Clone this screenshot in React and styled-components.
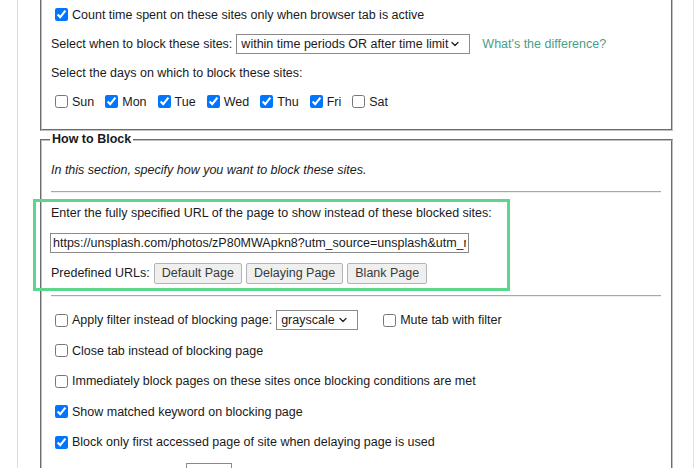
import { ChevronDown } from "lucide-react"
import styled, { createGlobalStyle } from "styled-components"

const GlobalStyle = createGlobalStyle`
  body {
    margin: 0;
    background: #fff;
    font-family: "Liberation Sans", Arial, sans-serif;
    font-size: 12.5px;
    color: #1a1a1a;
    overflow: hidden;
  }
`
const Frame = styled.div`
  margin-left: 17px;
  width: 677px;
  height: 468px;
  box-sizing: border-box;
  border-left: 1px solid #dcdcdc;
  border-right: 1px solid #e2e2e2;
  padding: 0 20px 0 22px;
  overflow: hidden;
`
const Fieldset = styled.fieldset`
  margin: ${props => props.first ? "0" : "1px 0 0"};
  padding: 0 10px ${props => props.first ? "13px" : "0"} 9px;
  border: 2px groove #c0c0c0;
  ${props => props.first && "border-top: none;"}
  display: flex;
  flex-direction: column;
`
const Legend = styled.legend`
  padding: 0 2px;
  margin-left: -1px;
  font-weight: bold;
  line-height: 15px;
`
const Row = styled.div`
  display: flex;
  align-items: center;
  height: ${props => props.h || 29}px;
  margin-top: ${props => props.mt || 0}px;
  white-space: nowrap;
`
const Note = styled(Row)`
  font-style: italic;
`
const Check = styled.label`
  display: inline-flex;
  align-items: center;
  margin-right: ${props => props.gap || 0}px;
  margin-left: ${props => props.ml || 0}px;
  input {
    width: 13px;
    height: 13px;
    margin: 0 4px 0 4px;
    accent-color: #0075ff;
  }
`
const SelectBox = styled.span`
  display: inline-flex;
  align-items: center;
  justify-content: space-between;
  box-sizing: border-box;
  width: ${props => props.w}px;
  height: 20px;
  margin-left: 4px;
  padding: 0 8px 0 4px;
  border: 1px solid #8a8a8a;
  background: #fff;
  svg {
    color: #222;
  }
`
const Link = styled.a`
  margin-left: 12px;
  color: #4a9d8b;
  text-decoration: none;
`
const Rule = styled.hr`
  margin: ${props => props.m};
  border: none;
  border-top: 1px solid #a8a8a8;
  border-bottom: 1px solid #eeeeee;
  height: 0;
`
const Highlight = styled.div`
  margin-left: -18px;
  margin-top: 6px;
  width: 477px;
  box-sizing: border-box;
  border: 3px solid #5bd68b;
  padding: 0 0 4px 15px;
  display: flex;
  flex-direction: column;
  gap: 8px;
`
const UrlInput = styled.input`
  box-sizing: border-box;
  width: 419px;
  height: 20px;
  margin-left: -1px;
  padding: 0 2px;
  border: 1px solid #8a8a8a;
  font: inherit;
  color: #1a1a1a;
  outline: none;
`
const Buttons = styled.div`
  display: flex;
  gap: 4px;
  margin-left: 4px;
`
const Button = styled.button`
  height: 21px;
  padding: 0 7px;
  border: 1px solid #b4b4b4;
  border-radius: 2px;
  background: #efefef;
  font: inherit;
  color: #3a3a3a;
`

const days = [
  ["Sun", false], ["Mon", true], ["Tue", true], ["Wed", true],
  ["Thu", true], ["Fri", true], ["Sat", false],
]

const options = [
  ["Apply filter instead of blocking page:", false],
  ["Close tab instead of blocking page", false],
  ["Immediately block pages on these sites once blocking conditions are met", false],
  ["Show matched keyword on blocking page", true],
  ["Block only first accessed page of site when delaying page is used", true],
]

const Select = ({ w, children }) => (
  <SelectBox w={w}>
    {children}
    <ChevronDown size={12} strokeWidth={2.6} />
  </SelectBox>
)

const App = () => {
  return (
    <Frame>
      <GlobalStyle />
      <Fieldset first>
        <Row>
          <Check>
            <input type="checkbox" defaultChecked />
            Count time spent on these sites only when browser tab is active
          </Check>
        </Row>
        <Row>
          Select when to block these sites:
          <Select w={234}>within time periods OR after time limit</Select>
          <Link href="#">What's the difference?</Link>
        </Row>
        <Row>Select the days on which to block these sites:</Row>
        <Row>
          {days.map(([d, on]) => (
            <Check key={d} gap={7}>
              <input type="checkbox" defaultChecked={on} />
              {d}
            </Check>
          ))}
        </Row>
      </Fieldset>

      <Fieldset>
        <Legend>How to Block</Legend>
        <Note h={30} mt={8}>In this section, specify how you want to block these sites.</Note>
        <Rule m="6px 0 0" />
        <Highlight>
          <Row h={22}>Enter the fully specified URL of the page to show instead of these blocked sites:</Row>
          <Row h={22}>
            <UrlInput
              readOnly
              value="https://unsplash.com/photos/zP80MWApkn8?utm_source=unsplash&utm_medium=referral&utm_content=creditCopyText"
            />
          </Row>
          <Row h={22}>
            Predefined URLs:
            <Buttons>
              <Button>Default Page</Button>
              <Button>Delaying Page</Button>
              <Button>Blank Page</Button>
            </Buttons>
          </Row>
        </Highlight>
        <Rule m="4px 0 8px" />
        {options.map(([text, on], i) => (
          <Row h={30.5} key={text}>
            <Check>
              <input type="checkbox" defaultChecked={on} />
              {text}
            </Check>
            {i === 0 && (
              <>
                <Select w={82}>grayscale</Select>
                <Check ml={21}>
                  <input type="checkbox" />
                  Mute tab with filter
                </Check>
              </>
            )}
          </Row>
        ))}
        <Row h={30.5}>
          Delay page countdown:
          <Select w={46}>Max</Select>
        </Row>
      </Fieldset>
    </Frame>
  )
}

export default App
